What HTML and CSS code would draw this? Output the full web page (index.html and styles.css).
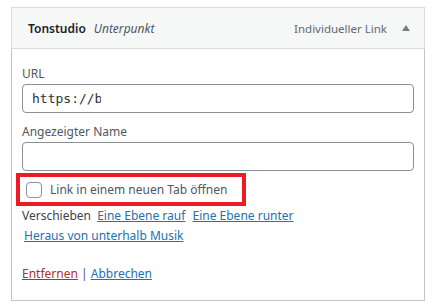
FILE: index.html
```html
<!DOCTYPE html>
<html lang="de">
<head>
    <meta charset="UTF-8">
    <title>Menüeintrag</title>
    <link rel="stylesheet" href="styles.css">
</head>
<body>
    <div class="menu-item">
        <!-- Item header -->
        <div class="item-bar">
            <span class="item-title">Tonstudio</span>
            <span class="item-sub">Unterpunkt</span>
            <span class="item-type">Individueller Link</span>
            <span class="item-toggle"></span>
        </div>

        <!-- Item settings -->
        <div class="item-settings">
            <label class="field-label">URL</label>
            <div class="text-field url-field"><span class="url-value">https://b</span></div>

            <label class="field-label name-label">Angezeigter Name</label>
            <div class="text-field"></div>

            <div class="target-row">
                <span class="checkbox"></span>
                <span>Link in einem neuen Tab öffnen</span>
            </div>

            <div class="move-row">
                <span class="move-label">Verschieben</span>
                <a href="#">Eine Ebene rauf</a>
                <a href="#">Eine Ebene runter</a>
            </div>
            <div class="move-row second">
                <a href="#">Heraus von unterhalb Musik</a>
            </div>

            <div class="actions">
                <a href="#" class="delete">Entfernen</a> <span class="sep">|</span> <a href="#">Abbrechen</a>
            </div>
        </div>
    </div>
</body>
</html>
```

FILE: styles.css
```css
body {
    margin: 0;
    background: #ffffff;
    font-family: 'Noto Sans', sans-serif;
    font-size: 12px;
    color: #3c434a;
}

.menu-item {
    width: 414px;
    margin: 7px 0 0 11px;
}

.item-bar {
    display: flex;
    align-items: center;
    height: 40px;
    padding: 0 14px 0 16px;
    background: #f6f7f7;
    border: 1px solid #dcdcde;
    color: #1d2327;
}

.item-title {
    font-weight: 600;
    font-size: 12px;
}

.item-sub {
    margin-left: 8px;
    font-style: italic;
    color: #50575e;
}

.item-type {
    margin-left: auto;
    color: #646970;
    font-size: 11.5px;
}

.item-toggle {
    width: 0;
    height: 0;
    margin-left: 15px;
    border-left: 4px solid transparent;
    border-right: 4px solid transparent;
    border-bottom: 6px solid #787c82;
}

.item-settings {
    border: 1px solid #c3c4c7;
    border-top: none;
    padding: 16px 10px 18px 10px;
    height: 252px;
    box-sizing: border-box;
}

.field-label {
    display: block;
    color: #50575e;
    line-height: 17px;
    margin-bottom: 2px;
}

.name-label {
    margin-top: 10px;
}

.text-field {
    height: 29px;
    box-sizing: border-box;
    border: 1px solid #8c8f94;
    border-radius: 4px;
    background: #fff;
    padding: 0 9px;
    display: flex;
    align-items: center;
}

.url-value {
    display: inline-block;
    width: 69px;
    overflow: hidden;
    white-space: nowrap;
    font-family: 'DejaVu Sans Mono', monospace;
    font-size: 13px;
    color: #2c3338;
}

.target-row {
    display: flex;
    align-items: center;
    gap: 8px;
    width: 216px;
    height: 25px;
    margin: 2px 0 0 -6px;
    padding-left: 6px;
    border: 4px solid #ed1c24;
    color: #50575e;
}

.checkbox {
    width: 16px;
    height: 16px;
    box-sizing: border-box;
    border: 1px solid #8c8f94;
    border-radius: 4px;
    background: #fff;
}

.move-row {
    line-height: 20px;
}

.move-row.second {
    padding-left: 2px;
}

.move-label {
    color: #3c434a;
    margin-right: 3px;
}

a {
    color: #2271b1;
    text-decoration: underline;
    margin-right: 4px;
}

.actions {
    margin-top: 18px;
    line-height: 20px;
}

.actions a {
    margin-right: 0;
}

.actions .delete {
    color: #b32d2e;
}

.sep {
    color: #50575e;
}
```
